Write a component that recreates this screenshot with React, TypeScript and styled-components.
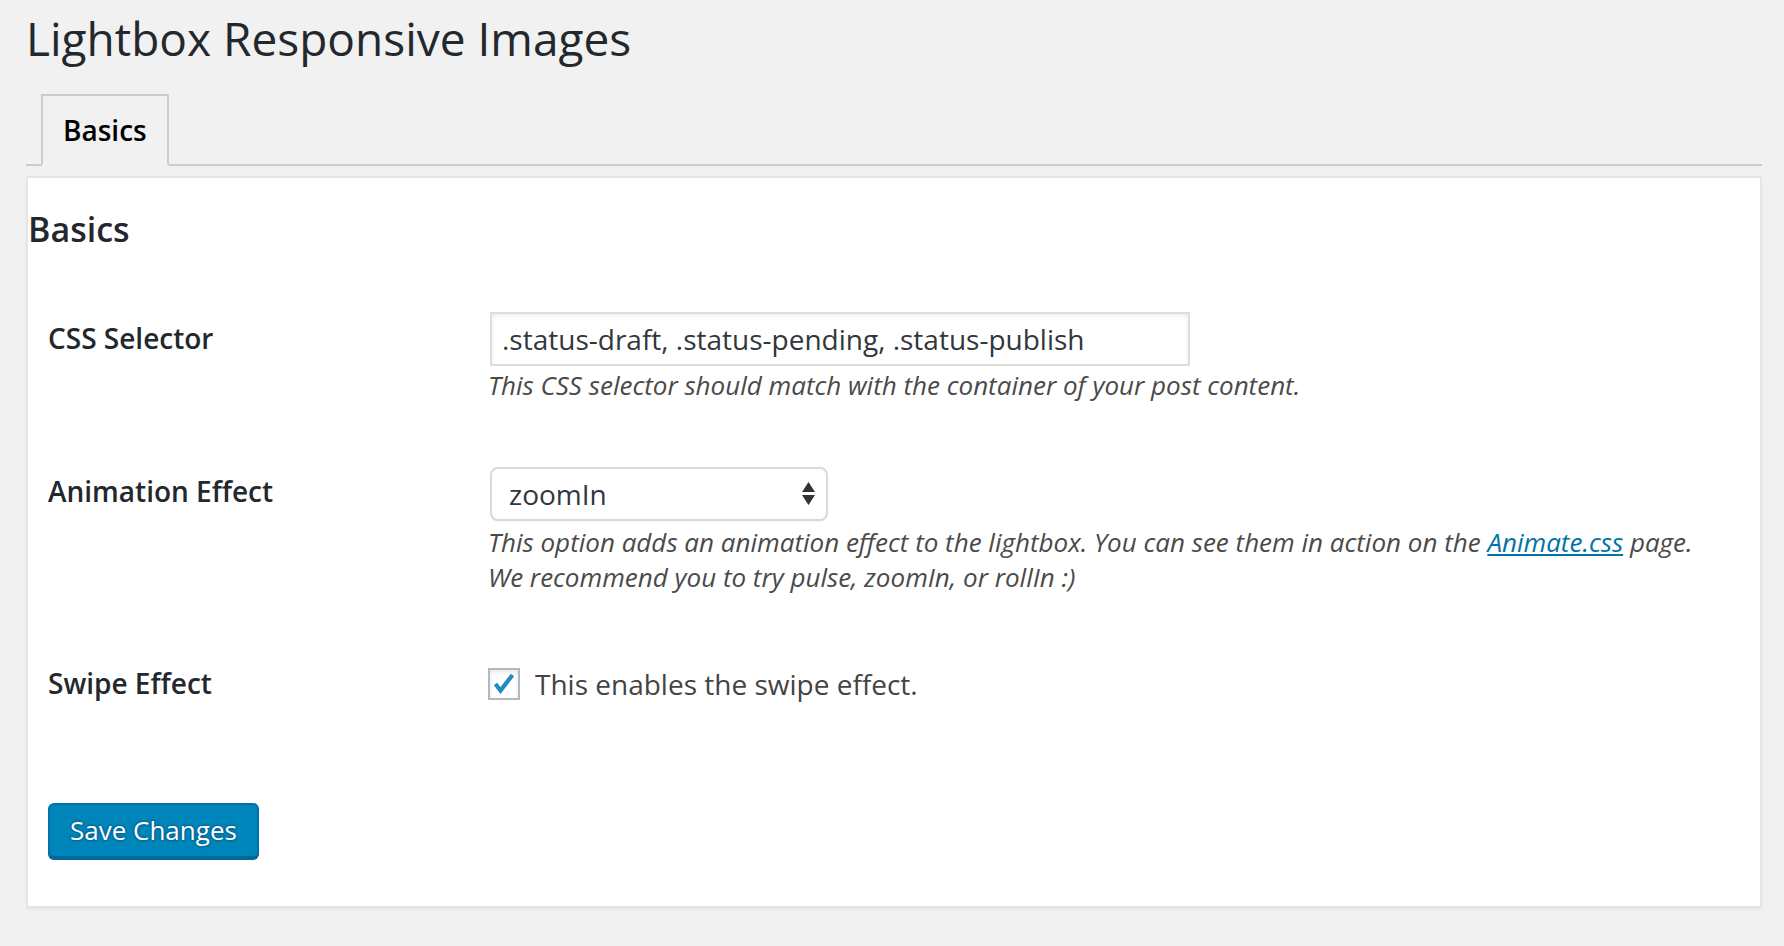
import styled, { createGlobalStyle } from "styled-components"

const GlobalStyle = createGlobalStyle`
  body {
    margin: 0;
    background: #f1f1f1;
    font-family: "Open Sans", "Liberation Sans", sans-serif;
    color: #444;
  }
`

const Wrap = styled.div`
  padding: 9px 22px 38px 24px;
`

const Title = styled.h1`
  margin: 0 0 0 2px;
  font-size: 46px;
  line-height: 58px;
  font-weight: 400;
  color: #23282d;
`

const TabBar = styled.nav`
  display: flex;
  margin: 27px 0 0 2px;
  padding-left: 15px;
  border-bottom: 2px solid #ccc;
`

const Tab = styled.a<{ $active?: boolean }>`
  padding: 10px 20px;
  margin-bottom: -2px;
  border: 2px solid #ccc;
  border-bottom-color: ${(p) => (p.$active ? "#f1f1f1" : "#ccc")};
  background: ${(p) => (p.$active ? "#f1f1f1" : "#e5e5e5")};
  color: ${(p) => (p.$active ? "#000" : "#555")};
  font-size: 28px;
  line-height: 48px;
  font-weight: 600;
  text-decoration: none;
`

const Panel = styled.section`
  margin: 10px 0 0 2px;
  background: #fff;
  border: 2px solid #e5e5e5;
  box-shadow: 0 2px 2px rgba(0, 0, 0, 0.04);
`

const SectionTitle = styled.h2`
  margin: 29px 0;
  font-size: 34px;
  line-height: 44px;
  font-weight: 600;
  color: #23282d;
`

const Body = styled.div`
  padding: 0 20px 48px;
`

const FormTable = styled.table`
  width: 100%;
  border-collapse: collapse;
`

const Label = styled.th`
  width: 400px;
  padding: 40px 20px 40px 0;
  vertical-align: top;
  text-align: left;
  font-size: 28px;
  line-height: 1.3;
  font-weight: 600;
  color: #23282d;
`

const Field = styled.td`
  padding: 30px 20px;
  vertical-align: top;
`

const TextInput = styled.input`
  display: block;
  box-sizing: border-box;
  width: 700px;
  height: 54px;
  margin: 2px 0 2px 2px;
  padding: 0 10px;
  border: 2px solid #ddd;
  box-shadow: inset 0 2px 4px rgba(0, 0, 0, 0.07);
  background: #fff;
  font-family: inherit;
  font-size: 28px;
  color: #32373c;
  outline: none;
`

const SelectWrap = styled.div`
  position: relative;
  width: 338px;
  margin: 4px 0 4px 2px;
`

const Select = styled.select`
  display: block;
  box-sizing: border-box;
  width: 100%;
  height: 54px;
  padding: 0 40px 0 17px;
  appearance: none;
  border: 2px solid #d9d9d9;
  border-radius: 8px;
  background: #fff;
  box-shadow: 0 1px 1px rgba(0, 0, 0, 0.04);
  font-family: inherit;
  font-size: 28px;
  color: #32373c;
  outline: none;
`

const SelectArrows = styled.svg`
  position: absolute;
  right: 13px;
  top: 15px;
  pointer-events: none;
`

const Description = styled.p`
  margin: 0;
  font-size: 26px;
  line-height: 35px;
  font-style: italic;
  color: #4a4a4a;

  a {
    color: #0073aa;
  }
`

const CheckLabel = styled.label`
  display: flex;
  align-items: center;
  height: 58px;
  font-size: 28px;
  color: #444;
`

const CheckBox = styled.span`
  box-sizing: border-box;
  display: inline-flex;
  flex-shrink: 0;
  width: 32px;
  height: 32px;
  margin-right: 15px;
  border: 2px solid #b4b9be;
  background: #fff;
  box-shadow: inset 0 2px 4px rgba(0, 0, 0, 0.1);
`

const Submit = styled.div`
  margin-top: 60px;
`

const PrimaryButton = styled.button`
  height: 55px;
  padding: 0 20px 2px;
  border: 2px solid #0073aa;
  border-bottom-color: #006799;
  border-radius: 6px;
  background: #0085ba;
  box-shadow: 0 2px 0 #006799;
  color: #fff;
  font-family: inherit;
  font-size: 26px;
  text-shadow: 0 -1px 2px #006799, 1px 0 2px #006799, 0 1px 2px #006799,
    -1px 0 2px #006799;
  cursor: pointer;
`

export default function App() {
  return (
    <>
      <GlobalStyle />
      <Wrap>
        <Title>Lightbox Responsive Images</Title>
        <TabBar>
          <Tab $active href="#basics">
            Basics
          </Tab>
        </TabBar>
        <Panel>
          <SectionTitle>Basics</SectionTitle>
          <Body>
            <FormTable>
              <tbody>
                <tr>
                  <Label>CSS Selector</Label>
                  <Field>
                    <TextInput
                      type="text"
                      defaultValue=".status-draft, .status-pending, .status-publish"
                    />
                    <Description>
                      This CSS selector should match with the container of your post content.
                    </Description>
                  </Field>
                </tr>
                <tr>
                  <Label>Animation Effect</Label>
                  <Field>
                    <SelectWrap>
                      <Select defaultValue="zoomIn">
                        <option>pulse</option>
                        <option>zoomIn</option>
                        <option>rollIn</option>
                      </Select>
                      <SelectArrows width="13" height="24" viewBox="0 0 13 24">
                        <path d="M0 10 L6.5 0 L13 10 Z M0 13 L13 13 L6.5 23 Z" fill="#333" />
                      </SelectArrows>
                    </SelectWrap>
                    <Description>
                      This option adds an animation effect to the lightbox. You can see them in
                      action on the <a href="#animate">Animate.css</a> page.
                      <br />
                      We recommend you to try pulse, zoomIn, or rollIn :)
                    </Description>
                  </Field>
                </tr>
                <tr>
                  <Label>Swipe Effect</Label>
                  <Field>
                    <CheckLabel>
                      <CheckBox>
                        <svg width="28" height="28" viewBox="0 0 28 28">
                          <path
                            d="M5.5 14 L10.5 20.5 L22.5 5"
                            fill="none"
                            stroke="#1e8cbe"
                            strokeWidth="4.2"
                          />
                        </svg>
                      </CheckBox>
                      This enables the swipe effect.
                    </CheckLabel>
                  </Field>
                </tr>
              </tbody>
            </FormTable>
            <Submit>
              <PrimaryButton type="button">Save Changes</PrimaryButton>
            </Submit>
          </Body>
        </Panel>
      </Wrap>
    </>
  )
}
